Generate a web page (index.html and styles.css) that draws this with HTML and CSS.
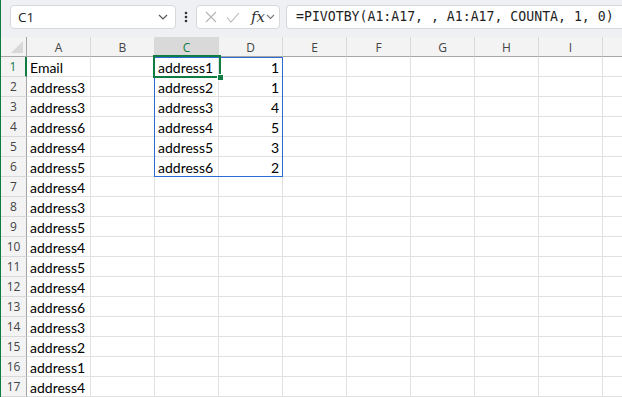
FILE: index.html
```html
<!DOCTYPE html>
<html lang="en">
<head>
    <meta charset="UTF-8">
    <meta name="viewport" content="width=device-width, initial-scale=1.0">
    <title>PIVOTBY</title>
    <link rel="stylesheet" href="styles.css">
</head>
<body>
    <div id="window">
        <div id="formula-bar">
            <div class="name-box">
                <span>C1</span>
                <svg class="chevron" width="10" height="6" viewBox="0 0 10 6"><path d="M1 1l4 4 4-4" fill="none" stroke="#555" stroke-width="1.2"/></svg>
            </div>
            <svg class="dots" width="4" height="12" viewBox="0 0 4 12"><circle cx="2" cy="2" r="1.3" fill="#333"/><circle cx="2" cy="6" r="1.3" fill="#333"/><circle cx="2" cy="10" r="1.3" fill="#333"/></svg>
            <div class="fx-box">
                <svg width="12" height="12" viewBox="0 0 12 12"><path d="M1 1l10 10M11 1L1 11" stroke="#b4b4b4" stroke-width="1.1"/></svg>
                <svg width="14" height="11" viewBox="0 0 14 11"><path d="M1 5.5l4 4.5 8-9" fill="none" stroke="#b4b4b4" stroke-width="1.1"/></svg>
                <span class="fx">fx</span>
                <svg class="chevron" width="9" height="6" viewBox="0 0 9 6"><path d="M1 1l3.5 3.5L8 1" fill="none" stroke="#777" stroke-width="1.1"/></svg>
            </div>
            <div class="formula">=PIVOTBY(A1:A17, , A1:A17, COUNTA, 1, 0)</div>
        </div>

        <div id="sheet">
            <div id="grid"></div>
            <div class="range"></div>
            <div class="selection"><span class="handle"></span></div>
        </div>
    </div>

    <script>
        // last column is cut by the window edge, so it gets no letter
        const columns=["A","B","C","D","E","F","G","H","I",""];
        const colA=["Email","address3","address3","address6","address4","address5","address4","address3","address5","address4","address5","address4","address6","address3","address2","address1","address4"];
        const pivot=[["address1",1],["address2",1],["address3",4],["address4",5],["address5",3],["address6",2]];

        const grid=document.getElementById("grid");
        let html=`<div class="corner"><span class="tri"></span></div>`;
        columns.forEach(col=>{
            html+=`<div class="col-head${col==="C"?" active":""}">${col}</div>`;
        });

        colA.forEach((value,i)=>{
            const row=i+1;
            html+=`<div class="row-head${row===1?" active":""}">${row}</div>`;
            columns.forEach((col,c)=>{
                let text="";
                let cls="cell";
                if(c===0) text=value;
                if(c===2 && pivot[i]) text=pivot[i][0];
                if(c===3 && pivot[i]){ text=pivot[i][1]; cls+=" num"; }
                html+=`<div class="${cls}">${text}</div>`;
            });
        });
        grid.innerHTML=html;
    </script>
</body>
</html>
```

FILE: styles.css
```css
*{
    margin:0;
    padding:0;
    box-sizing:border-box;
}

body{
    width:622px;
    height:397px;
    overflow:hidden;
    background-color:#fff;
    font-family:"Open Sans", Arial, sans-serif;
}

#window{
    border-left:1px solid #107c41;
    height:397px;
    overflow:hidden;
}

#formula-bar{
    height:37px;
    background-color:#eef0f3;
    display:flex;
    align-items:flex-start;
    padding-top:5px;
    padding-left:9px;
}

#formula-bar > *{
    flex-shrink:0;
}

.name-box{
    width:166px;
    height:24px;
    background-color:#fff;
    border:1px solid #d6d8dc;
    border-radius:4px;
    display:flex;
    align-items:center;
    justify-content:space-between;
    padding:0 7px 0 7px;
    font-size:13.5px;
    color:#222;
}

.dots{
    margin:6px 0 0 8px;
}

.fx-box{
    width:84px;
    height:24px;
    margin-left:8px;
    background-color:#fff;
    border:1px solid #d6d8dc;
    border-radius:4px;
    display:flex;
    align-items:center;
    padding-left:8px;
    gap:9px;
}

.fx-box .fx{
    font-family:"DejaVu Serif", "Liberation Serif", serif;
    font-style:italic;
    font-size:15px;
    color:#333;
    margin-left:2px;
}

.fx-box .chevron{
    margin-left:-8px;
}

.formula{
    margin-left:6px;
    width:345px;
    height:24px;
    background-color:#fff;
    border:1px solid #d6d8dc;
    border-right:none;
    border-radius:4px 0 0 4px;
    padding-left:9px;
    font-family:"DejaVu Sans Mono", "Liberation Mono", monospace;
    font-size:13.2px;
    line-height:22px;
    color:#1e1e1e;
    white-space:nowrap;
    overflow:hidden;
}

#sheet{
    position:relative;
}

#grid{
    display:grid;
    grid-template-columns:26px repeat(9, 64px) 20px;
    grid-auto-rows:20px;
}

.corner{
    background-color:#f3f3f3;
    border-right:1px solid #a6a6a6;
    border-bottom:1px solid #a6a6a6;
    position:relative;
}

.corner .tri{
    position:absolute;
    right:3px;
    bottom:3px;
    width:0;
    height:0;
    border-left:12px solid transparent;
    border-bottom:12px solid #d8d8d8;
}

.col-head{
    background-color:#f3f3f3;
    border-right:1px solid #d8d8d8;
    border-bottom:1px solid #a6a6a6;
    text-align:center;
    font-size:12px;
    line-height:21px;
    color:#444;
}

.col-head.active{
    background-color:#d9d9d9;
    color:#107c41;
    border-bottom:2px solid #107c41;
}

.row-head{
    background-color:#f3f3f3;
    border-right:1px solid #a6a6a6;
    border-bottom:1px solid #d8d8d8;
    text-align:center;
    font-size:12px;
    line-height:20px;
    color:#444;
}

.row-head.active{
    color:#107c41;
    border-right:2px solid #107c41;
}

.cell{
    border-right:1px solid #e1e1e1;
    border-bottom:1px solid #e1e1e1;
    padding:0 3px;
    font-family:"Lato", "Liberation Sans", sans-serif;
    font-size:14px;
    line-height:21px;
    color:#000;
    white-space:nowrap;
    overflow:hidden;
}

.cell.num{
    text-align:right;
}

.range{
    position:absolute;
    left:153px;
    top:20px;
    width:129px;
    height:120px;
    border:1px solid #2f6bd6;
}

.selection{
    position:absolute;
    left:152px;
    top:18px;
    width:68px;
    height:23px;
    border:2px solid #107c41;
}

.selection .handle{
    position:absolute;
    right:-5px;
    bottom:-5px;
    width:7px;
    height:7px;
    background-color:#107c41;
    border:1px solid #fff;
}
```
